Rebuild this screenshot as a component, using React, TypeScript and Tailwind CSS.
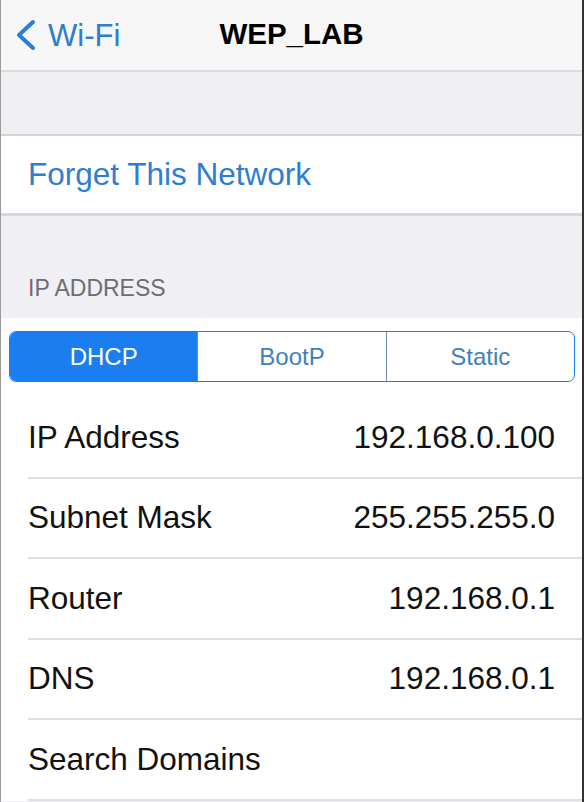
export default function App() {
  const rows = [
    { label: 'IP Address', value: '192.168.0.100' },
    { label: 'Subnet Mask', value: '255.255.255.0' },
    { label: 'Router', value: '192.168.0.1' },
    { label: 'DNS', value: '192.168.0.1' },
    { label: 'Search Domains', value: '' },
  ];
  const segments = ['DHCP', 'BootP', 'Static'];

  return (
    <div className="w-[584px] h-[802px] overflow-hidden bg-[#efeff4] border-l border-l-[#9a9a9a] border-r-2 border-r-[#333] font-['Liberation_Sans',Arial,sans-serif]">
      {/* nav bar */}
      <div className="relative h-[72px] bg-[#f7f7f7] border-b-2 border-[#dcdcdc] flex items-center">
        <div className="flex items-center pl-[13px] text-[#2d7dd2]">
          <svg width="24" height="32" viewBox="0 0 24 32" fill="none" stroke="currentColor" strokeWidth="4" strokeLinecap="round" strokeLinejoin="round">
            <polyline points="19 3 5 16 19 29" />
          </svg>
          <span className="ml-[10px] text-[31px] leading-none">Wi-Fi</span>
        </div>
        <div className="absolute left-0 right-0 text-center pointer-events-none">
          <span className="text-[29.5px] font-bold leading-none text-black">WEP_LAB</span>
        </div>
      </div>

      {/* empty band */}
      <div className="h-[64px] border-b-2 border-[#d4d4d8]" />

      <div className="h-[80px] bg-white flex items-center pl-[27px] border-b-[3px] border-[#d8d8dc]">
        <span className="text-[31.5px] text-[#2d7dd2] leading-none">Forget This Network</span>
      </div>

      <div className="h-[102px] flex items-end pl-[27px] pb-[18px]">
        <span className="text-[23px] text-[#6d6d72] leading-none">IP ADDRESS</span>
      </div>

      <div className="bg-white">
        <div className="pt-[13px] pb-[16px] pl-[8px] pr-[7px]">
          <div className="flex h-[51px] rounded-[7px] border-[1.5px] border-[#1a7ef0] overflow-hidden">
            {segments.map((s, i) => (
              <div
                key={s}
                className={
                  i === 0
                    ? 'flex-1 flex items-center justify-center bg-[#1a7ef0] text-white text-[24px]'
                    : 'flex-1 flex items-center justify-center border-l-[1.5px] border-[#6a8fb0] text-[#3f7fc0] text-[24px]'
                }
              >
                {s}
              </div>
            ))}
          </div>
        </div>

        {rows.map(r => (
          <div key={r.label} className="pl-[27px]">
            <div className="h-[80.5px] flex items-center justify-between pr-[27px] border-b-2 border-[#e0e0e3]">
              <span className="text-[31.5px] text-[#111] leading-none">{r.label}</span>
              {r.value && <span className="text-[31.5px] text-[#111] leading-none">{r.value}</span>}
            </div>
          </div>
        ))}
      </div>
    </div>
  );
}
